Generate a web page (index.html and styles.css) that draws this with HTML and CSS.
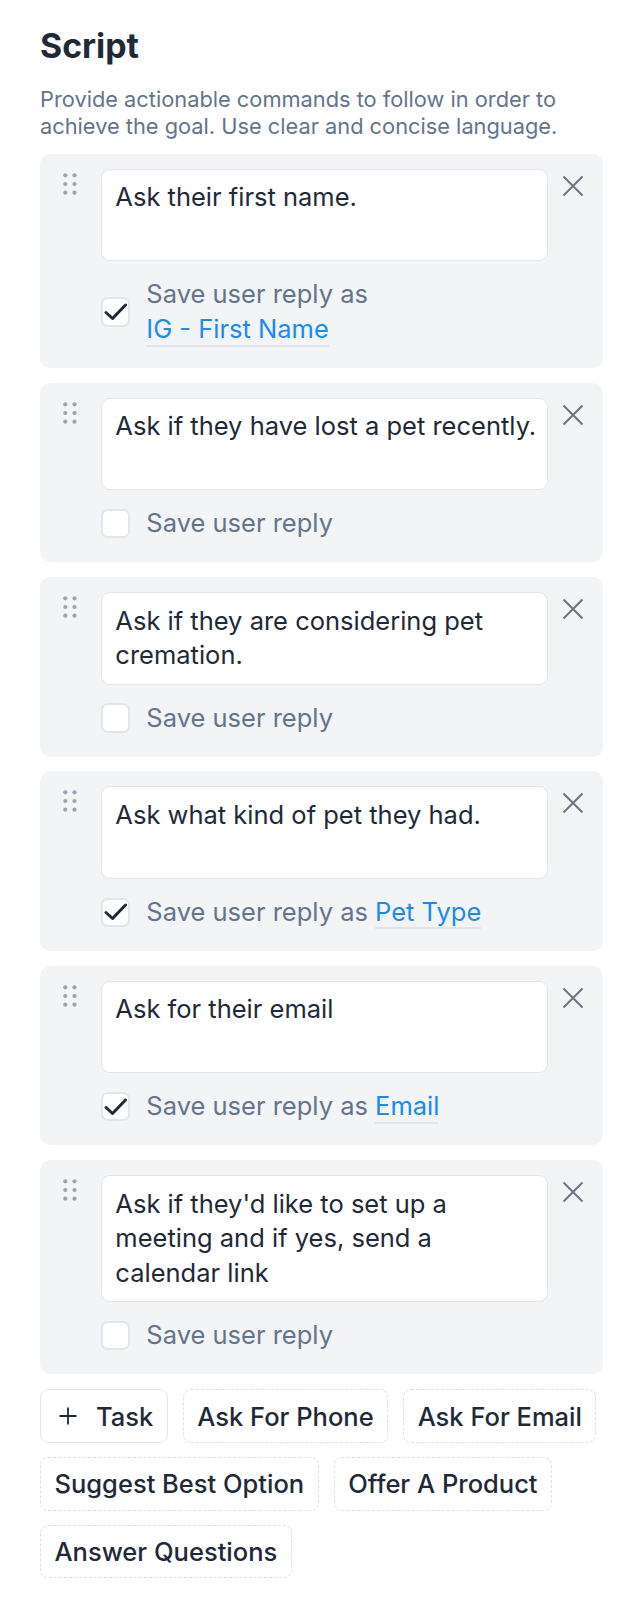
FILE: index.html
```html
<!DOCTYPE html>
<html lang="en">
<head>
    <meta charset="UTF-8">
    <meta name="viewport" content="width=device-width, initial-scale=1.0">
    <title>Script</title>
    <link rel="stylesheet" href="styles.css">
</head>
<body>
    <div class="script-panel">
        <h2 class="title">Script</h2>
        <p class="hint">Provide actionable commands to follow in order to achieve the goal. Use clear and concise language.</p>

        <div class="task-list">
            <div class="task">
                <span class="drag"><svg width="14" height="22" viewBox="0 0 14 22"><circle cx="2.3" cy="2.3" r="2.1"/><circle cx="11.5" cy="2.3" r="2.1"/><circle cx="2.3" cy="11" r="2.1"/><circle cx="11.5" cy="11" r="2.1"/><circle cx="2.3" cy="19.7" r="2.1"/><circle cx="11.5" cy="19.7" r="2.1"/></svg></span>
                <div class="task-body">
                    <div class="task-input">Ask their first name.</div>
                    <label class="save-row">
                        <span class="check"><svg width="24" height="24" viewBox="0 0 24 24"><polyline points="2,12.5 8.5,18.5 21.5,5"/></svg></span>
                        <span class="save-label">Save user reply as <span class="var">IG - First Name</span></span>
                    </label>
                </div>
                <button class="remove"><svg width="22" height="22" viewBox="0 0 22 22"><path d="M1.5 1.5 L20.5 20.5 M20.5 1.5 L1.5 20.5"/></svg></button>
            </div>

            <div class="task">
                <span class="drag"><svg width="14" height="22" viewBox="0 0 14 22"><circle cx="2.3" cy="2.3" r="2.1"/><circle cx="11.5" cy="2.3" r="2.1"/><circle cx="2.3" cy="11" r="2.1"/><circle cx="11.5" cy="11" r="2.1"/><circle cx="2.3" cy="19.7" r="2.1"/><circle cx="11.5" cy="19.7" r="2.1"/></svg></span>
                <div class="task-body">
                    <div class="task-input">Ask if they have lost a pet recently.</div>
                    <label class="save-row">
                        <span class="check"></span>
                        <span class="save-label">Save user reply</span>
                    </label>
                </div>
                <button class="remove"><svg width="22" height="22" viewBox="0 0 22 22"><path d="M1.5 1.5 L20.5 20.5 M20.5 1.5 L1.5 20.5"/></svg></button>
            </div>

            <div class="task">
                <span class="drag"><svg width="14" height="22" viewBox="0 0 14 22"><circle cx="2.3" cy="2.3" r="2.1"/><circle cx="11.5" cy="2.3" r="2.1"/><circle cx="2.3" cy="11" r="2.1"/><circle cx="11.5" cy="11" r="2.1"/><circle cx="2.3" cy="19.7" r="2.1"/><circle cx="11.5" cy="19.7" r="2.1"/></svg></span>
                <div class="task-body">
                    <div class="task-input">Ask if they are considering pet cremation.</div>
                    <label class="save-row">
                        <span class="check"></span>
                        <span class="save-label">Save user reply</span>
                    </label>
                </div>
                <button class="remove"><svg width="22" height="22" viewBox="0 0 22 22"><path d="M1.5 1.5 L20.5 20.5 M20.5 1.5 L1.5 20.5"/></svg></button>
            </div>

            <div class="task">
                <span class="drag"><svg width="14" height="22" viewBox="0 0 14 22"><circle cx="2.3" cy="2.3" r="2.1"/><circle cx="11.5" cy="2.3" r="2.1"/><circle cx="2.3" cy="11" r="2.1"/><circle cx="11.5" cy="11" r="2.1"/><circle cx="2.3" cy="19.7" r="2.1"/><circle cx="11.5" cy="19.7" r="2.1"/></svg></span>
                <div class="task-body">
                    <div class="task-input">Ask what kind of pet they had.</div>
                    <label class="save-row">
                        <span class="check"><svg width="24" height="24" viewBox="0 0 24 24"><polyline points="2,12.5 8.5,18.5 21.5,5"/></svg></span>
                        <span class="save-label">Save user reply as <span class="var">Pet Type</span></span>
                    </label>
                </div>
                <button class="remove"><svg width="22" height="22" viewBox="0 0 22 22"><path d="M1.5 1.5 L20.5 20.5 M20.5 1.5 L1.5 20.5"/></svg></button>
            </div>

            <div class="task">
                <span class="drag"><svg width="14" height="22" viewBox="0 0 14 22"><circle cx="2.3" cy="2.3" r="2.1"/><circle cx="11.5" cy="2.3" r="2.1"/><circle cx="2.3" cy="11" r="2.1"/><circle cx="11.5" cy="11" r="2.1"/><circle cx="2.3" cy="19.7" r="2.1"/><circle cx="11.5" cy="19.7" r="2.1"/></svg></span>
                <div class="task-body">
                    <div class="task-input">Ask for their email</div>
                    <label class="save-row">
                        <span class="check"><svg width="24" height="24" viewBox="0 0 24 24"><polyline points="2,12.5 8.5,18.5 21.5,5"/></svg></span>
                        <span class="save-label">Save user reply as <span class="var">Email</span></span>
                    </label>
                </div>
                <button class="remove"><svg width="22" height="22" viewBox="0 0 22 22"><path d="M1.5 1.5 L20.5 20.5 M20.5 1.5 L1.5 20.5"/></svg></button>
            </div>

            <div class="task">
                <span class="drag"><svg width="14" height="22" viewBox="0 0 14 22"><circle cx="2.3" cy="2.3" r="2.1"/><circle cx="11.5" cy="2.3" r="2.1"/><circle cx="2.3" cy="11" r="2.1"/><circle cx="11.5" cy="11" r="2.1"/><circle cx="2.3" cy="19.7" r="2.1"/><circle cx="11.5" cy="19.7" r="2.1"/></svg></span>
                <div class="task-body">
                    <div class="task-input">Ask if they'd like to set up a<br>meeting and if yes, send a<br>calendar link</div>
                    <label class="save-row">
                        <span class="check"></span>
                        <span class="save-label">Save user reply</span>
                    </label>
                </div>
                <button class="remove"><svg width="22" height="22" viewBox="0 0 22 22"><path d="M1.5 1.5 L20.5 20.5 M20.5 1.5 L1.5 20.5"/></svg></button>
            </div>
        </div>

        <div class="quick-actions">
            <button class="chip chip-add"><svg width="20" height="20" viewBox="0 0 20 20"><path d="M10 1.5 V18.5 M1.5 10 H18.5"/></svg>Task</button>
            <button class="chip">Ask For Phone</button>
            <button class="chip">Ask For Email</button>
            <button class="chip">Suggest Best Option</button>
            <button class="chip">Offer A Product</button>
            <button class="chip">Answer Questions</button>
        </div>
    </div>
</body>
</html>
```

FILE: styles.css
```css
body {
    margin: 0;
    padding: 26px 40px 20px;
    font-family: "Inter", "Noto Sans", sans-serif;
    background-color: #FFFFFF;
    color: #1f2937;
}
.title {
    margin: 0 0 20px;
    font-size: 33.8px;
    line-height: 40px;
    font-weight: 700;
    color: #1f2937;
}
.hint {
    margin: 0 0 14.7px;
    font-size: 21.8px;
    line-height: 26.5px;
    color: #64748b;
}
.task-list {
    display: flex;
    flex-direction: column;
    gap: 14.5px;
}
.task {
    display: flex;
    align-items: flex-start;
    padding: 15px 19px 21.5px 23px;
    background-color: #f3f4f6;
    border-radius: 10px;
}
.drag {
    display: flex;
    margin: 4px 24px 0 0;
}
.drag svg {
    fill: #9ca3af;
}
.task-body {
    flex: 1;
    min-width: 0;
}
.task-input {
    min-height: 69.33px;
    padding: 10.67px 3px 10.67px 13.33px;
    border: 1px solid #e3e5ea;
    border-radius: 9px;
    background-color: #fff;
    font-size: 25.5px;
    line-height: 34.67px;
    color: #1f2937;
}
.save-row {
    display: flex;
    align-items: center;
    gap: 16px;
    margin-top: 16px;
}
.check {
    flex: none;
    display: flex;
    align-items: center;
    justify-content: center;
    box-sizing: border-box;
    width: 29.33px;
    height: 29.33px;
    border: 2.67px solid #e2e5ea;
    border-radius: 6.67px;
    background-color: #fff;
}
.check svg {
    fill: none;
    stroke: #1f2937;
    stroke-width: 3;
    stroke-linecap: round;
    stroke-linejoin: round;
}
.save-label {
    font-size: 25.5px;
    line-height: 34.67px;
    color: #64748b;
}
.var {
    white-space: nowrap;
    color: #1a8af5;
    padding-bottom: 0.5px;
    border-bottom: 2.67px solid #e2e4ea;
}
.remove {
    display: flex;
    margin: 6px 0 0 14px;
    padding: 0;
    border: none;
    background: none;
}
.remove svg {
    stroke: #6b7280;
    stroke-width: 1.9;
}
.quick-actions {
    display: flex;
    flex-wrap: wrap;
    gap: 14.5px 15px;
    margin-top: 15px;
}
.chip {
    display: flex;
    align-items: center;
    box-sizing: border-box;
    height: 53.33px;
    padding: 0 13.5px;
    border: 1.5px dashed #dcdfe6;
    border-radius: 8px;
    background: transparent;
    font-family: inherit;
    font-size: 25.5px;
    font-weight: 500;
    color: #1f2937;
}
.chip-add {
    padding-left: 17px;
    border: 1.5px solid #e2e5ea;
    background-color: #fff;
}
.chip-add svg {
    margin-right: 18px;
    stroke: #1f2937;
    stroke-width: 1.8;
}
```
